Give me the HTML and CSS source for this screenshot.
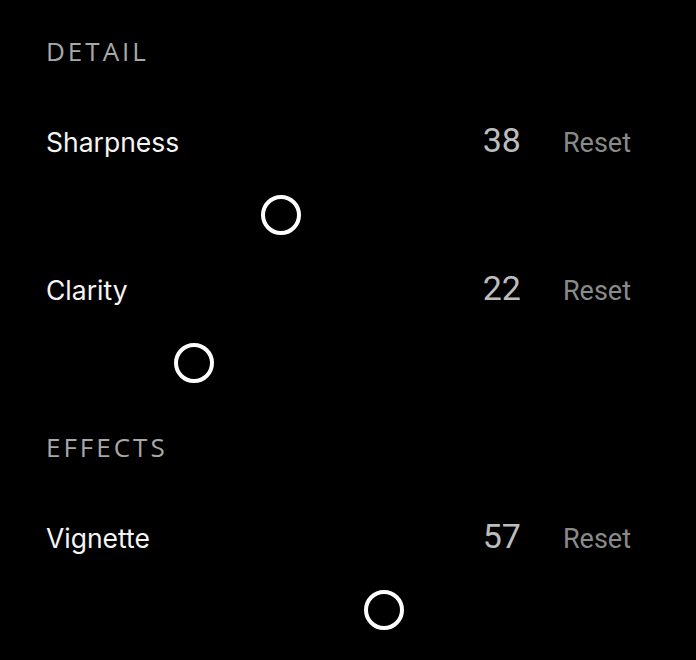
FILE: index.html
```html
<!DOCTYPE html>
<html lang="en">
<head>
    <meta charset="UTF-8">
    <meta name="viewport" content="width=device-width, initial-scale=1.0">
    <title>Adjustments</title>
    <link rel="stylesheet" href="styles.css">
</head>
<body>

    <main class="panel">
        <section class="group">
            <h2 class="group-title">DETAIL</h2>

            <div class="control">
                <div class="control-head">
                    <span class="control-label">Sharpness</span>
                    <span class="control-value">38</span>
                    <button class="control-reset">Reset</button>
                </div>
                <div class="slider">
                    <span class="slider-thumb" style="left: 38%"></span>
                </div>
            </div>

            <div class="control">
                <div class="control-head">
                    <span class="control-label">Clarity</span>
                    <span class="control-value">22</span>
                    <button class="control-reset">Reset</button>
                </div>
                <div class="slider">
                    <span class="slider-thumb" style="left: 22%"></span>
                </div>
            </div>
        </section>

        <section class="group">
            <h2 class="group-title">EFFECTS</h2>

            <div class="control">
                <div class="control-head">
                    <span class="control-label">Vignette</span>
                    <span class="control-value">57</span>
                    <button class="control-reset">Reset</button>
                </div>
                <div class="slider">
                    <span class="slider-thumb" style="left: 57%"></span>
                </div>
            </div>
        </section>
    </main>

</body>
</html>
```

FILE: styles.css
```css
/* Basic styling */
body {
    margin: 0;
    background-color: #000;
    color: #f5f5f5;
    font-family: Inter, "Noto Sans", sans-serif;
}

.panel {
    width: 600px;
    padding: 31px 0 0 46px;
}

.group-title {
    margin: 0;
    font-family: "Open Sans", sans-serif;
    font-size: 26px;
    font-weight: 400;
    line-height: 40px;
    letter-spacing: 3px;
    color: #a8a8a8;
}

.group + .group .group-title {
    margin-top: 44px;
}

.control {
    margin-top: 33.5px;
}

.group-title + .control {
    margin-top: 49px;
}

.control-head {
    display: flex;
    align-items: baseline;
    height: 40px;
}

.control-label {
    flex: 1;
    font-size: 26.5px;
    line-height: 40px;
}

.control-value {
    font-family: Roboto, sans-serif;
    font-size: 34px;
    line-height: 40px;
    color: #bdbdbd;
}

.control-reset {
    margin-left: 42px;
    margin-right: 15px;
    padding: 0;
    border: none;
    background: none;
    font-family: Roboto, sans-serif;
    font-size: 27px;
    line-height: 40px;
    color: #8a8a8a;
    cursor: pointer;
}

.slider {
    position: relative;
    height: 40px;
    margin: 34.5px 28px 0;
}

.slider-thumb {
    position: absolute;
    top: 0;
    width: 32px;
    height: 32px;
    border: 4px solid #fff;
    border-radius: 50%;
    transform: translateX(-50%);
}
```
